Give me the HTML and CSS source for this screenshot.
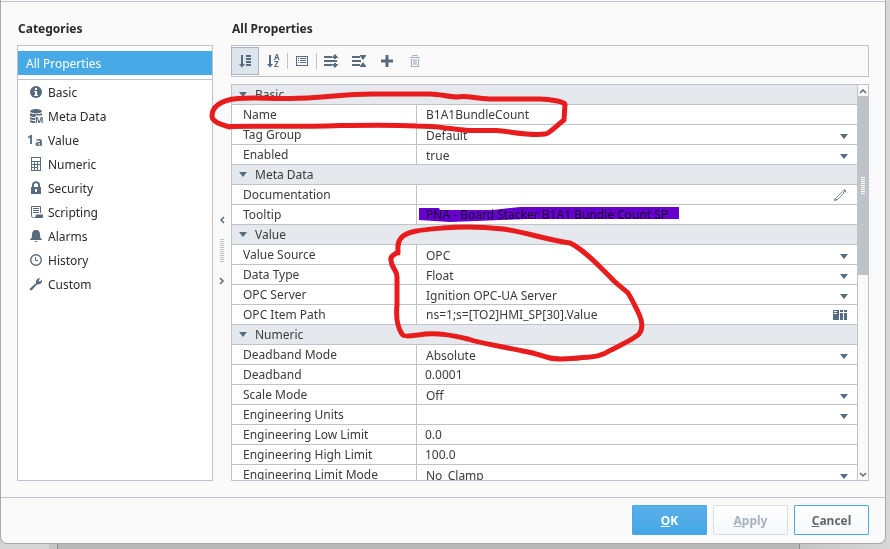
FILE: index.html
```
<!DOCTYPE html>
<html lang="en">
<head>
  <meta charset="UTF-8">
  <meta name="viewport" content="width=device-width, initial-scale=1.0">
  <title>Tag Editor</title>
  <link rel="stylesheet" href="styles.css">
</head>
<body>
  <div class="dialog">
    <div class="dialog-header"></div>
    <main class="content">
      <section class="sidebar">
        <h2>Categories</h2>
        <nav class="categories">
          <a href="#all" class="all selected">All Properties</a>
          <a href="#basic">
            <svg class="icon" viewBox="0 0 14 14"><circle cx="7" cy="7" r="6"/><path fill="#fff" d="M6 3h2v2H6zM5 6h3v4h1v1H5v-1h1V7H5z"/></svg>
            Basic</a>
          <a href="#meta">
            <svg class="icon" viewBox="0 0 14 14"><ellipse cx="7" cy="2.2" rx="6" ry="2.2"/><path d="M1 4c2 1.600 10 1.600 12 0v2.500H6.500V8C4 8 2 7.600 1 7zM1 8.200c1 .5 3 .8 5 .8v2c-2 0-4-.3-5-.8zM1 11.200c1 .5 3 .8 5 .8v2c-3 0-5-.5-5-1.300z"/><text class="glyph" x="6" y="14" font-size="9">M</text></svg>
            Meta Data</a>
          <a href="#value">
            <svg class="icon wide" viewBox="0 0 16 14"><text class="glyph" x="0" y="11" font-size="12">1</text><text class="glyph" x="8" y="13" font-size="13">a</text></svg>
            Value</a>
          <a href="#numeric">
            <svg class="icon" viewBox="0 0 14 14"><path fill-rule="evenodd" d="M2 0h10v14H2zM3 1v3h8V1zM3 5v2h2V5zM6 5v2h2V5zM9 5v2h2V5zM3 8v2h2V8zM6 8v2h2V8zM9 8v5h2V8zM3 11v2h2v-2zM6 11v2h2v-2z"/></svg>
            Numeric</a>
          <a href="#security">
            <svg class="icon" viewBox="0 0 14 14"><path fill-rule="evenodd" d="M2 6h1V4c0-5 8-5 8 0v2h1v7H2zM5 6h4V4c0-2.300-4-2.300-4 0zM6 8v3h2V8z"/></svg>
            Security</a>
          <a href="#scripting">
            <svg class="icon" viewBox="0 0 14 14"><path d="M11.500 8V1.500h-9v9c0 1.500.5 2 2 2" fill="none" stroke="currentColor"/><path d="M4 3h6v1H4zM4 5h6v1H4zM4 7h6v1H4zM7 9.500h7v2c0 1.200-.5 1.500-1.500 1.500H4.500c1.500-.5 2.500-1.500 2.500-3.500z"/></svg>
            Scripting</a>
          <a href="#alarms">
            <svg class="icon" viewBox="0 0 14 14"><path d="M7 1c3 0 4 2 4 5 0 2.500.5 3.500 2 4.500v.5H1v-.5C2.500 9.500 3 8.500 3 6c0-3 1-5 4-5zM5.500 12h3c-.3 1.300-2.700 1.300-3 0z"/></svg>
            Alarms</a>
          <a href="#history">
            <svg class="icon" viewBox="0 0 14 14"><circle cx="7" cy="7" r="5.300" fill="none" stroke="currentColor" stroke-width="1.400"/><path d="M6.500 4v3.500H9" fill="none" stroke="currentColor"/></svg>
            History</a>
          <a href="#custom">
            <svg class="icon" viewBox="0 0 14 14"><path d="M1 11.500 7 6C6.500 3 8.500.8 11.500 1.200L9.500 3.300l1.200 1.400L13 2.800C13.400 6 11 8 8.200 7.300L3 13c-1.200 1-3-.5-2-1.500z"/></svg>
            Custom</a>
        </nav>
      </section>

      <div class="splitter">
        <button aria-label="Collapse"><svg viewBox="0 0 6 8"><path d="M5 1 2 4l3 3"/></svg></button>
        <span class="grip"></span>
        <button aria-label="Expand"><svg viewBox="0 0 6 8"><path d="M1 1l3 3-3 3"/></svg></button>
      </div>

      <section class="properties">
        <h2>All Properties</h2>
        <div class="toolbar">
          <button class="active" aria-label="Categorized">
            <svg class="tool" viewBox="0 0 14 14"><path d="M3 1h2v9h2l-3 3.500L1 10h2zM8 1h5v2H8zM8 4h5v2H8zM8 7h5v2H8zM8 10h5v2H8z"/></svg>
          </button>
          <button aria-label="Sort A to Z">
            <svg class="tool" viewBox="0 0 14 14"><path d="M3 1h2v9h2l-3 3.500L1 10h2z"/><text class="glyph" x="8" y="6" font-size="8">A</text><text class="glyph" x="8" y="13" font-size="8">Z</text></svg>
          </button>
          <span class="divider"></span>
          <button aria-label="Show description">
            <svg class="tool" viewBox="0 0 14 14"><path fill-rule="evenodd" d="M1 2h12v10H1zM2 3v8h10V3zM3 4h1v1H3zM5 4h6v1H5zM3 6h1v1H3zM5 6h6v1H5zM3 8h1v1H3zM5 8h6v1H5z"/></svg>
          </button>
          <span class="divider"></span>
          <button aria-label="Expand all">
            <svg class="tool" viewBox="0 0 14 14"><path d="M0 2h8v2H0zM0 6h13v2H0zM0 10h8v2H0zM11 0l3.500 4H12v1h-2V4H7.500zM11 14l3.500-4H12V9h-2v1H7.500z"/></svg>
          </button>
          <button aria-label="Collapse all">
            <svg class="tool" viewBox="0 0 14 14"><path d="M0 2h8v2H0zM0 6h9v2H0zM0 10h8v2H0zM8 1h6v1l-3 4-3-4zM8 13h6v-1l-3-4-3 4z"/></svg>
          </button>
          <button aria-label="Add property">
            <svg class="tool" viewBox="0 0 14 14"><path d="M5.500 1h3v4.500H13v3H8.500V13h-3V8.500H1v-3h4.500z"/></svg>
          </button>
          <button disabled aria-label="Delete property">
            <svg class="tool" viewBox="0 0 14 14"><path d="M5 2.500v-1h4v1M2 3.500h10M3.500 5v7.500h7V5M6 5v6M8 5v6" fill="none" stroke="currentColor" stroke-width="1.200"/></svg>
          </button>
        </div>

        <div class="pane">
          <div class="scroll-area">
            <table>
              <colgroup>
                <col class="label-col">
                <col>
              </colgroup>
              <tbody>
                <tr class="group"><th colspan="2">Basic</th></tr>
                <tr><th><label for="name">Name</label></th><td><input id="name" type="text" value="B1A1BundleCount"></td></tr>
                <tr><th><label for="tag-group">Tag Group</label></th><td><select id="tag-group"><option>Default</option></select></td></tr>
                <tr><th><label for="enabled">Enabled</label></th><td><select id="enabled"><option>true</option><option>false</option></select></td></tr>
                <tr class="group"><th colspan="2">Meta Data</th></tr>
                <tr>
                  <th><label for="documentation">Documentation</label></th>
                  <td>
                    <div class="field">
                      <input id="documentation" type="text">
                      <button aria-label="Edit documentation"><svg class="tool pencil" viewBox="0 0 14 14"><path d="M2.500 10.500l7-7 1.500 1.500-7 7z" fill="none" stroke="currentColor"/><path d="M1 13l.5-3 2.500 2.500zM10 2.500 11.500 1l2 2L12 4.500z"/></svg></button>
                    </div>
                  </td>
                </tr>
                <tr><th><label for="tooltip">Tooltip</label></th><td><input id="tooltip" type="text" value="PNA - Board Stacker B1A1 Bundle Count SP"></td></tr>
                <tr class="group"><th colspan="2">Value</th></tr>
                <tr><th><label for="source">Value Source</label></th><td><select id="source"><option>OPC</option></select></td></tr>
                <tr><th><label for="data-type">Data Type</label></th><td><select id="data-type"><option>Float</option></select></td></tr>
                <tr><th><label for="server">OPC Server</label></th><td><select id="server"><option>Ignition OPC-UA Server</option></select></td></tr>
                <tr>
                  <th><label for="item-path">OPC Item Path</label></th>
                  <td>
                    <div class="field">
                      <input id="item-path" type="text" value="ns=1;s=[TO2]HMI_SP[30].Value">
                      <button aria-label="Browse OPC"><svg class="tool" viewBox="0 0 14 14"><path fill-rule="evenodd" d="M0 2h6v10H0zM1 3v1h3V3zM1 5v1h3V5zM7 2h3v2H7zM11 2h3v2h-3zM7 5h3v7H7zM11 5h3v7h-3z"/></svg></button>
                    </div>
                  </td>
                </tr>
                <tr class="group"><th colspan="2">Numeric</th></tr>
                <tr><th><label for="deadband-mode">Deadband Mode</label></th><td><select id="deadband-mode"><option>Absolute</option></select></td></tr>
                <tr><th><label for="deadband">Deadband</label></th><td><input id="deadband" class="number" type="text" value="0.0001"></td></tr>
                <tr><th><label for="scale-mode">Scale Mode</label></th><td><select id="scale-mode"><option>Off</option></select></td></tr>
                <tr><th><label for="units">Engineering Units</label></th><td><select id="units"><option></option></select></td></tr>
                <tr><th><label for="low-limit">Engineering Low Limit</label></th><td><input id="low-limit" class="number" type="text" value="0.0"></td></tr>
                <tr><th><label for="high-limit">Engineering High Limit</label></th><td><input id="high-limit" class="number" type="text" value="100.0"></td></tr>
                <tr><th><label for="limit-mode">Engineering Limit Mode</label></th><td><select id="limit-mode"><option>No_Clamp</option></select></td></tr>
              </tbody>
            </table>
          </div>
          <div class="scrollbar">
            <button aria-label="Scroll up"><svg viewBox="0 0 8 6"><path d="M1 5l3-3 3 3"/></svg></button>
            <div class="track"><div class="thumb"><span class="grip"></span></div></div>
            <button aria-label="Scroll down"><svg viewBox="0 0 8 6"><path d="M1 1l3 3 3-3"/></svg></button>
          </div>
        </div>
      </section>
    </main>

    <footer class="actions">
      <button class="btn primary"><u>O</u>K</button>
      <button class="btn" disabled><u>A</u>pply</button>
      <button class="btn outline"><u>C</u>ancel</button>
    </footer>
  </div>

  <!-- Marker strokes drawn over the dialog -->
  <svg class="markup highlight" viewBox="0 0 890 549">
    <path d="M419 208h20l1 2 53 0 27-3h159v12H527l-27 1-23 1-27 1-31-2z"/>
  </svg>
  <svg class="markup pen" viewBox="0 0 890 549">
    <path d="M230 127C222 125 212 122 212 116C212 108 219 100 238 98.500C256 97 270 99 290 98.500C320 98 345 94 372 94H430C440 94 448 97 457 97C469 95 475 99 490 99H540C550 99 565 102 565 104L564 120C556 126 549 134 545 134C530 136 514 132 496 130.500H470C450 129 438 126 416 126C400 125 370 125 340 125.500C300 127 265 126 230 126.500"/>
    <path d="M398 253C398 247 397 243 401 238C407 231 420 230 443 228C465 226 485 227 503 229C525 232 547 240 570 243C585 250 602 269 613 280C619 286 624 289 628 293C633 301 636 308 638 312C643 322 643 329 639 334C634 339 623 344 611 350C602 356 594 357 583 357.500C570 359 557 360 548 357.500C538 355 540 354 523 351C500 346 483 344 468 339C450 335 440 333 425 334C412 336 403 337 402 334C396 325 396 315 397 305V277C397 269 391 268 391 260C390 256 394 255 398 252"/>
  </svg>
</body>
</html>
```
FILE: styles.css
```
* {
  margin: 0;
  padding: 0;
  box-sizing: border-box;
}

body {
  height: 100vh;
  padding: 0 4px 5px 0;
  font-family: "Noto Sans", sans-serif;
  font-size: 12px;
  line-height: 17px;
  color: #3b3b3b;
  background: linear-gradient(to right, #d6d6d6 49px, #c6c6c6 49px, #c6c6c6 57px, #8c8c8c 57px, #8c8c8c 58px, #b8b8b8 58px, #b8b8b8 799px, #8c8c8c 799px, #8c8c8c 800px, #c4c4c4 800px, #d8d8d8);
}

button,
input,
select {
  font: inherit;
  color: inherit;
  background: none;
  border: none;
  border-radius: 0;
}

button {
  cursor: pointer;
}

h2 {
  font-size: 12px;
  line-height: 17px;
  font-weight: bold;
  color: #2b2b2b;
  padding-left: 1px;
  margin-bottom: 8px;
}

.dialog {
  display: flex;
  flex-direction: column;
  height: 100%;
  background: #fafafa;
  border: 1px solid #a8a8a8;
  border-top: none;
  border-radius: 0 0 7px 7px;
}

.dialog-header {
  height: 2px;
  border-bottom: 1px solid #bdc3c7;
}

.content {
  display: flex;
  flex: 1;
  min-height: 0;
  padding: 18px 16px 16px;
}

/* Categories */
.sidebar {
  display: flex;
  flex-direction: column;
  width: 196px;
}

.categories {
  flex: 1;
  padding-top: 5px;
  background: #fff;
  border: 1px solid #bdc3c7;
}

.categories a {
  display: flex;
  align-items: center;
  gap: 5px;
  height: 24px;
  padding-left: 11px;
  color: #2b2b2b;
  text-decoration: none;
}

.categories .all {
  padding-left: 8px;
}

.categories .selected {
  color: #fff;
  background: #47a9e6;
}

.categories .all + a {
  height: 25px;
  margin-top: 4px;
  border-top: 1px solid #bdc3c7;
}

.icon,
.tool {
  width: 14px;
  height: 14px;
  flex: none;
  color: #566b7d;
  fill: currentColor;
  overflow: visible;
}

.icon.wide {
  width: 16px;
  margin-left: -2px;
}

.glyph {
  font-weight: bold;
}

/* Splitter */
.splitter {
  display: flex;
  flex-direction: column;
  align-items: center;
  justify-content: center;
  gap: 12px;
  width: 18px;
}

.splitter button,
.scrollbar button {
  display: flex;
  align-items: center;
  justify-content: center;
}

.splitter svg,
.scrollbar svg {
  fill: none;
  stroke: #566b7d;
  stroke-width: 1.5;
}

.splitter svg {
  width: 6px;
  height: 8px;
}

.grip {
  width: 4px;
  height: 23px;
  background: repeating-linear-gradient(#bdc3c7 0 1px, transparent 1px 2px);
}

.splitter .grip {
  margin: 3px 0;
}

/* Toolbar */
.properties {
  display: flex;
  flex-direction: column;
  flex: 1;
  min-width: 0;
}

.toolbar {
  display: flex;
  align-items: center;
  height: 32px;
  margin-bottom: 7px;
  border: 1px solid #bdc3c7;
}

.toolbar button {
  display: flex;
  align-items: center;
  justify-content: center;
  width: 28px;
  height: 28px;
}

.toolbar .active {
  margin-left: -1px;
  background: #dce4ec;
  border: 1px solid #aab3bb;
}

.toolbar button:disabled {
  opacity: 0.5;
}

.divider {
  width: 1px;
  height: 16px;
  background: #bdc3c7;
}

/* Property table */
.pane {
  display: flex;
  flex: 1;
  min-height: 0;
  border: 1px solid #bdc3c7;
}

.scroll-area {
  flex: 1;
  overflow: hidden;
  background: #fff;
}

table {
  width: 100%;
  table-layout: fixed;
  border-spacing: 0;
}

.label-col {
  width: 185px;
}

th,
td {
  height: 20px;
  border-bottom: 1px solid #bdc3c7;
  line-height: 19px;
  vertical-align: top;
}

th {
  padding-left: 11px;
  font-weight: normal;
  text-align: left;
  border-right: 1px solid #bdc3c7;
}

label {
  display: block;
}

.group th {
  padding-left: 7px;
  background: #e5e8ed;
  border-right: none;
}

.group th::before {
  content: "";
  display: inline-block;
  margin-right: 8px;
  border: 4px solid transparent;
  border-top: 5px solid #566b7d;
  border-bottom: none;
  vertical-align: 2px;
}

td input,
td select {
  display: block;
  width: 100%;
  height: 19px;
  padding-left: 9px;
  outline: none;
}

td .number {
  padding-left: 8px;
}

td select {
  appearance: none;
  padding-top: 2px;
  line-height: 17px;
  background: url("data:image/svg+xml,%3Csvg xmlns='http://www.w3.org/2000/svg' width='8' height='5'%3E%3Cpath fill='%23566b7d' d='M0 0h8L4 5z'/%3E%3C/svg%3E") no-repeat right 9px top 9px;
}

.field {
  display: flex;
  align-items: center;
  padding-right: 10px;
}

.field input {
  flex: 1;
  min-width: 0;
}

.field button {
  display: flex;
}

.pencil {
  opacity: 0.8;
}

/* Scrollbar */
.scrollbar {
  display: flex;
  flex-direction: column;
  width: 11px;
  border-left: 1px solid #bdc3c7;
}

.scrollbar button {
  height: 11px;
}

.scrollbar svg {
  width: 8px;
  height: 6px;
}

.track {
  flex: 1;
}

.thumb {
  display: flex;
  align-items: center;
  justify-content: center;
  height: 48%;
  background: #bdc3c7;
}

.thumb .grip {
  height: 17px;
  background: repeating-linear-gradient(#fff 0 1px, transparent 1px 2px);
}

/* Footer */
.actions {
  display: flex;
  justify-content: flex-end;
  gap: 6px;
  padding: 7px 16px 8px;
  border-top: 1px solid #bdc3c7;
}

.btn {
  width: 75px;
  height: 30px;
  font-weight: bold;
  color: #606870;
  background: linear-gradient(#fff, #f5f7fa);
  border: 1px solid #dcdfe2;
  border-radius: 1px;
}

.btn:disabled {
  color: #a9b3bd;
}

.btn.primary {
  color: #fff;
  background: linear-gradient(#5aafe8, #45a6e6);
  border-color: #47a9e6;
}

.btn.outline {
  border-color: #47a9e6;
}

/* Marker strokes */
.markup {
  position: absolute;
  top: 0;
  left: 0;
  width: 890px;
  height: 549px;
  pointer-events: none;
}

.highlight {
  fill: #6600cc;
  mix-blend-mode: multiply;
}

.pen {
  fill: none;
  stroke: #e81c1c;
  stroke-width: 5;
  stroke-linecap: round;
  stroke-linejoin: round;
}
```
